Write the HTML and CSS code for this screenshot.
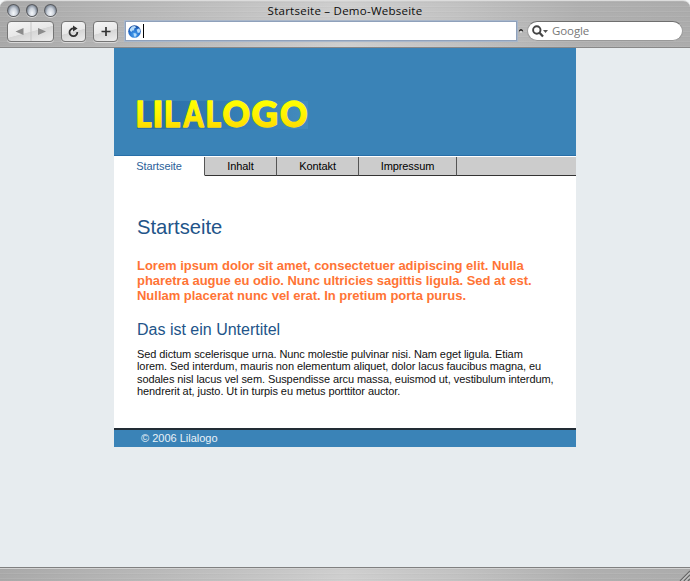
FILE: index.html
```
<!DOCTYPE html>
<html lang="de">
<head>
<meta charset="utf-8">
<title>Startseite – Demo-Webseite</title>
<link rel="stylesheet" href="styles.css">
</head>
<body>
<div class="window">
  <header class="chrome metal">
    <div class="titlebar">
      <div class="lights"><i></i><i></i><i></i></div>
      <span class="title">Startseite – Demo-Webseite</span>
    </div>
    <div class="toolbar">
      <div class="btn history">
        <svg width="46" height="19" viewBox="0 0 46 19"><path d="M15.500 6v7L7.500 9.500zM30 6v7l8-3.500z" fill="#8b8b8b"/><path d="M23 0v19" stroke="#c5c5c5"/></svg>
      </div>
      <div class="btn small reload">
        <svg width="24" height="19" viewBox="0 0 24 19"><path d="M15.300 10A3.900 3.900 0 1 1 11.500 6.400" fill="none" stroke="#333" stroke-width="1.800"/><path d="M11 3.400v6l4.600-3z" fill="#333"/></svg>
      </div>
      <div class="btn small add">
        <svg width="24" height="19" viewBox="0 0 24 19"><path d="M7.500 9.500h9M12 5v9" stroke="#333" stroke-width="1.700"/></svg>
      </div>
      <div class="address">
        <svg width="13" height="13" viewBox="0 0 13 13">
          <defs><radialGradient id="globe" cx=".5" cy=".75" r=".75"><stop offset="0" stop-color="#4ba4f0"/><stop offset=".55" stop-color="#2570cf"/><stop offset="1" stop-color="#174a9c"/></radialGradient></defs>
          <circle cx="6.500" cy="6.500" r="6.300" fill="url(#globe)"/>
          <path d="M1.800 4.200 4 1.600l3-.5 1 1.400-2 1.300.3 1.400-2.300.6-.4 1.300-1.500-1zM8.500 4.800l2.700-1.500 1 2.300-.4 2-2 .3zM5.500 8l2.600.6.700 1.300-1.600 2.200-1.200-.8z" fill="#b6dcfa"/>
        </svg>
        <b class="caret"></b>
      </div>
      <svg class="snap" width="6" height="5" viewBox="0 0 6 5"><path d="M.8 3.800C1 .2 5 .2 5.200 3.800L3 2.600z" fill="#222"/><path d="M2 4h2" stroke="#eee"/></svg>
      <div class="search">
        <svg width="17" height="13" viewBox="0 0 17 13"><circle cx="4.800" cy="5" r="3.700" fill="none" stroke="#444" stroke-width="1.900"/><path d="m7.500 7.800 3.500 3.700" stroke="#444" stroke-width="2.300"/><path d="M11 5h5l-2.500 3z" fill="#555"/></svg>
        <span>Google</span>
      </div>
    </div>
  </header>

  <main class="viewport">
    <div class="page">
      <div class="banner">
        <svg class="logo" width="172" height="29" viewBox="0 0 172 29" role="img">
          <defs>
            <linearGradient id="gold" x1="0" y1="0" x2="0" y2="28" gradientUnits="userSpaceOnUse"><stop offset="0" stop-color="#ff0"/><stop offset=".5" stop-color="#fff200"/><stop offset="1" stop-color="#ffd900"/></linearGradient>
            <linearGradient id="plate"><stop offset="0" stop-color="#286ca6"/><stop offset=".5" stop-color="#337bb3"/><stop offset="1" stop-color="#438bbd"/></linearGradient>
          </defs>
          <rect width="171" height="28" fill="url(#plate)"/>
          <text class="wordmark" y="26.300" fill="url(#gold)" stroke="url(#gold)"><tspan x="-1.500" textLength="16" lengthAdjust="spacingAndGlyphs">L</tspan><tspan x="15.500" textLength="11" lengthAdjust="spacingAndGlyphs">I</tspan><tspan x="27" textLength="16" lengthAdjust="spacingAndGlyphs">L</tspan><tspan x="46.500" textLength="20" lengthAdjust="spacingAndGlyphs">A</tspan><tspan x="68.500" textLength="15.500" lengthAdjust="spacingAndGlyphs">L</tspan><tspan x="85.500" textLength="27.500" lengthAdjust="spacingAndGlyphs">O</tspan><tspan x="114.500" textLength="26.500" lengthAdjust="spacingAndGlyphs">G</tspan><tspan x="143" textLength="27.500" lengthAdjust="spacingAndGlyphs">O</tspan></text>
        </svg>
      </div>
      <nav class="tabs">
        <a class="tab active">Startseite</a>
        <a class="tab inhalt">Inhalt</a>
        <a class="tab kontakt">Kontakt</a>
        <a class="tab impressum">Impressum</a>
        <span class="rest"></span>
      </nav>
      <article class="content">
        <h1>Startseite</h1>
        <p class="lead">Lorem ipsum dolor sit amet, consectetuer adipiscing elit. Nulla<br>pharetra augue eu odio. Nunc ultricies sagittis ligula. Sed at est.<br>Nullam placerat nunc vel erat. In pretium porta purus.</p>
        <h2>Das ist ein Untertitel</h2>
        <p class="copy">Sed dictum scelerisque urna. Nunc molestie pulvinar nisi. Nam eget ligula. Etiam<br>lorem. Sed interdum, mauris non elementum aliquet, dolor lacus faucibus magna, eu<br>sodales nisl lacus vel sem. Suspendisse arcu massa, euismod ut, vestibulum interdum,<br>hendrerit at, justo. Ut in turpis eu metus porttitor auctor.</p>
      </article>
      <footer class="footer">© 2006 Lilalogo</footer>
    </div>
  </main>

  <div class="statusbar metal">
    <svg width="11" height="11" viewBox="0 0 11 11"><path d="M1 11 11 1M5 11l6-6M9 11l2-2" stroke="#666" stroke-width="1.200"/><path d="M2.500 11 11 2.500M6.500 11 11 6.500" stroke="#ddd" stroke-width=".8"/></svg>
  </div>
</div>
</body>
</html>
```
FILE: styles.css
```
* { box-sizing: border-box; }
body { margin: 0; background: #f4f6f7; font-family: "Liberation Sans", Arial, sans-serif; }
svg { display: block; flex: none; overflow: visible; }
.window { display: flex; flex-direction: column; width: 690px; height: 581px; overflow: hidden; }

.metal {
  background:
    repeating-linear-gradient(180deg, rgba(255,255,255,.07) 0 1px, rgba(0,0,0,.02) 1px 2px, transparent 2px 5px),
    linear-gradient(90deg, #a9a9a9 0, #b3b3b3 14%, #c0c0c0 32%, #cfcfcf 50%, #c2c2c2 66%, #b0b0b0 84%, #acacac 100%);
}
.chrome { height: 48px; border-radius: 7px 7px 0 0; border-top: 1px solid #dcdcdc; border-bottom: 1px solid #888; }
.titlebar { display: grid; grid-template-columns: 1fr auto 1fr; height: 20px; padding-left: 7px; padding-right: 7px; }
.lights { display: flex; gap: 6px; padding-top: 3px; }
.lights i {
  width: 12.600px; height: 13px; border-radius: 50%; border: 1px solid #5a5c60;
  background: radial-gradient(ellipse at 50% 75%, #f5f8fb 0, #ccd2db 42%, #8d97a4 68%, #454b55 100%);
  box-shadow: 0 1px 0 #d5d5d5;
}
.title { font: 500 11.500px/19px "Open Sans", "Noto Sans", sans-serif; letter-spacing: .25px; color: #0c0c0c; white-space: nowrap; }
.toolbar { display: flex; align-items: flex-start; padding-left: 7px; }
.btn {
  height: 21px; border: 1px solid #757575; border-radius: 4px; overflow: hidden;
  background: linear-gradient(165deg, #f5f5f5 0, #e8e8e8 50%, #d6d6d6 52%, #ededed 100%);
  box-shadow: 0 1px 0 #d8d8d8;
}
.history { width: 47px; }
.small { width: 25px; margin-left: 7px; }
.address {
  display: flex; align-items: center; width: 392px; height: 20px; margin-left: 7px; padding-left: 2px;
  background: #fff; border: 1px solid #8fa1bb; box-shadow: 0 0 0 1px #a9b7ca;
}
.caret { width: 1px; height: 14px; margin-left: 2px; background: #000; }
.snap { margin: 7px 0 0 1px; }
.search {
  display: flex; align-items: center; gap: 3px; width: 156px; height: 20px; margin-left: 3px; padding-left: 4px;
  border-radius: 10px; background: #fff; border: 1px solid #999; border-top-color: #6f6f6f;
}
.search span { font: 11.500px/18px "Open Sans", "Noto Sans", sans-serif; letter-spacing: -.1px; color: #777; }

.viewport { flex: 1; background: #e7ecef; }
.page { width: 462px; margin-left: 114px; background: #fff; }
.banner { height: 108px; padding: 53px 0 0 23px; background: #3a83b7; border-bottom: 1px solid #286fa8; }
.wordmark { font: 900 35.500px "Lato", sans-serif; stroke-width: 1.3; stroke-linejoin: round; }
.tabs { display: flex; height: 20px; padding-top: 1px; }
.tab, .rest { height: 19px; background: #ccc; border-bottom: 1px solid #333; }
.tab { font-size: 11px; letter-spacing: -.08px; line-height: 18px; color: #000; text-align: center; border-right: 1px solid #555; }
.active { width: 91px; background: #fff; border-bottom-color: #fff; color: #2c5f9a; }
.inhalt { width: 72px; }
.kontakt { width: 82px; }
.impressum { width: 98px; }
.rest { flex: 1; }
.content { height: 252px; padding: 39px 0 0 23px; white-space: nowrap; }
h1, h2, p { margin: 0; }
h1 { font-size: 20.200px; line-height: 24px; font-weight: 400; color: #225489; }
.lead { margin-top: 19px; font-size: 13px; letter-spacing: -.02px; line-height: 15px; font-weight: 700; color: #ff7435; }
h2 { margin-top: 16px; font-size: 16px; line-height: 22px; font-weight: 400; color: #225489; }
.copy { margin-top: 7px; font-size: 11px; letter-spacing: -.085px; line-height: 12.400px; color: #111; }
.footer { height: 19px; padding-left: 27px; border-top: 2px solid #222c35; background: #3a83b7; color: #e9f2f8; font-size: 11px; line-height: 17px; }

.statusbar { display: flex; justify-content: flex-end; align-items: flex-end; height: 14px; border-top: 1px solid #808080; box-shadow: inset 0 1px 0 #d2d2d2; }
```
